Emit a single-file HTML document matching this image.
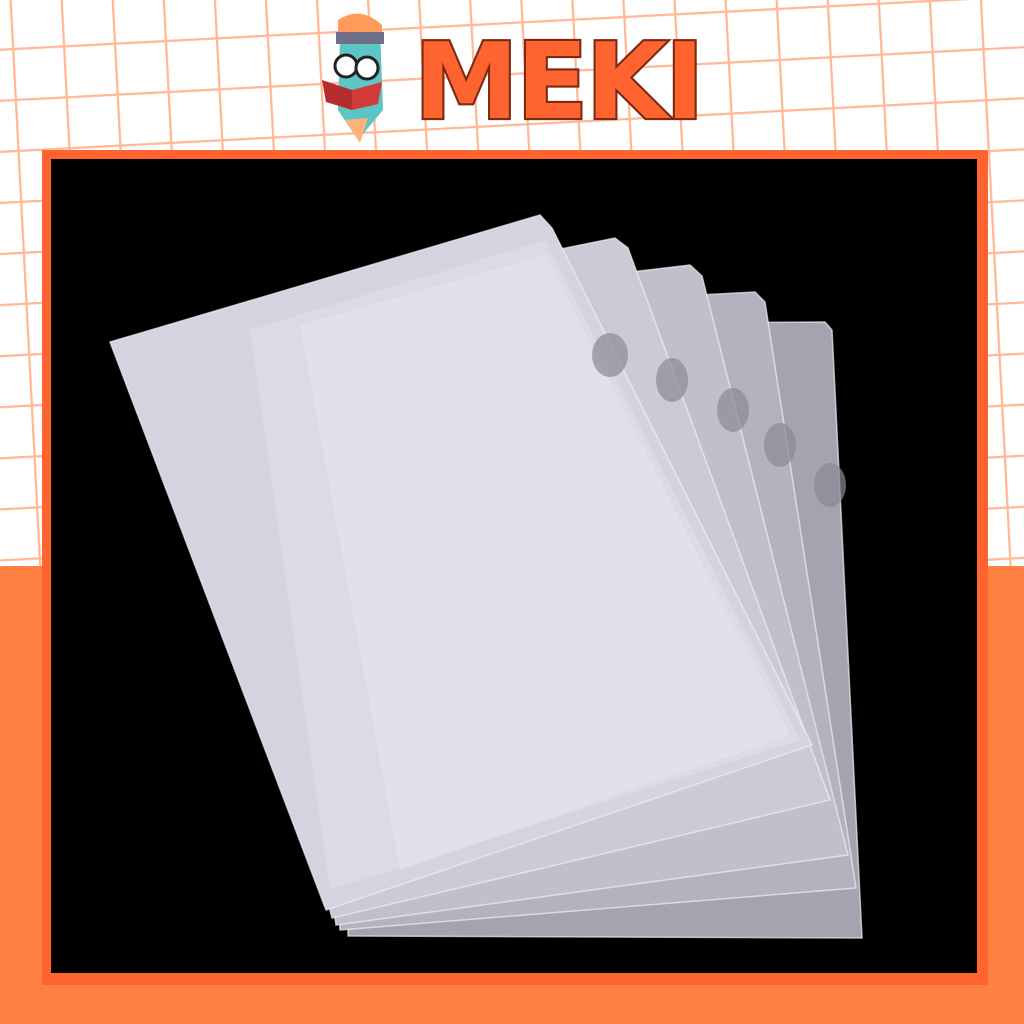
<!DOCTYPE html>
<html><head><style>
html,body{margin:0;padding:0;width:1024px;height:1024px;overflow:hidden;background:#fff}
</style></head><body>
<svg width="1024" height="1024" viewBox="0 0 1024 1024" xmlns="http://www.w3.org/2000/svg">
<defs>
<pattern id="g" width="51" height="51" patternUnits="userSpaceOnUse" patternTransform="translate(12,48) rotate(-3)">
<rect width="51" height="51" fill="#fff"/>
<path d="M0 0H51M0 0V51" stroke="#ffb896" stroke-width="4.5" fill="none"/>
</pattern>
</defs>
<rect width="1024" height="566" fill="url(#g)"/>
<rect y="566" width="1024" height="458" fill="#ff8142"/>
<rect x="42" y="150" width="946" height="835" fill="#ff6330"/>
<rect x="51" y="159" width="926" height="814" fill="#000"/>
<g stroke="#eeeef5" stroke-width="1.5" stroke-opacity="0.7">
<polygon points="345,325 825,322 832,330 862,938 348,936" fill="#a4a4b0"/>
<polygon points="300,316 755,292 765,302 856,888 340,930" fill="#b3b3bf"/>
<polygon points="245,318 690,265 702,276 848,855 336,925" fill="#c0c0cc"/>
<polygon points="180,326 615,238 628,248 830,800 332,918" fill="#cbcbd7"/>
<polygon points="110,342 540,215 552,228 812,745 326,910" fill="#d4d4e0"/>
</g>
<polygon points="250,330 545,240 800,740 330,890" fill="#dedeea" opacity="0.7"/>
<polygon points="300,325 545,255 790,735 400,870" fill="#e4e4f0" opacity="0.6"/>
<g fill="#8a8a96" opacity="0.7">
<ellipse cx="610" cy="355" rx="18" ry="22"/>
<ellipse cx="672" cy="380" rx="16" ry="22"/>
<ellipse cx="733" cy="410" rx="16" ry="22"/>
<ellipse cx="780" cy="445" rx="16" ry="22"/>
<ellipse cx="830" cy="485" rx="16" ry="22"/>
</g>
<!-- logo -->
<g>
<path d="M340 35 Q360 8 380 28 L383 110 L358 140 L338 110 Z" fill="#5cc6c4"/>
<path d="M338 20 Q360 5 382 25 L382 42 L338 42 Z" fill="#ff9a5a"/>
<rect x="336" y="32" width="48" height="12" fill="#6f6f8a"/>
<circle cx="346" cy="66" r="11" fill="#fff" stroke="#222" stroke-width="3"/>
<circle cx="367" cy="68" r="11" fill="#fff" stroke="#222" stroke-width="3"/>
<path d="M322 80 L352 90 L352 110 L326 102 Z" fill="#b52d2d"/>
<path d="M352 90 L382 82 L378 104 L352 110 Z" fill="#d33a3a"/>
<path d="M345 120 L360 143 L368 118 Z" fill="#ffb27a"/>
<text x="0" y="0" transform="translate(414,118) scale(1.05,1.05)" font-family="'DejaVu Sans',sans-serif" font-size="100" font-weight="bold" fill="#ff6330" stroke="#7a2a10" stroke-width="4" paint-order="stroke" letter-spacing="-2">MEKI</text>
</g>
</svg>
</body></html>
